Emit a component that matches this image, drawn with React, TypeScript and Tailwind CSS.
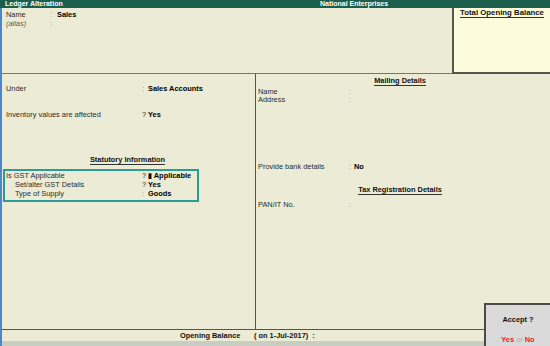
import React from "react";

const Row = ({
  label,
  sep,
  value,
  labelW,
  sepW,
  indent = 0,
  italic = false,
  lh = "leading-[9px]",
}: {
  label: string;
  sep: string;
  value?: React.ReactNode;
  labelW: string;
  sepW: string;
  indent?: number;
  italic?: boolean;
  lh?: string;
}) => (
  <div className={`flex ${lh}`}>
    <div className={`${labelW} shrink-0 text-[#2a2a2a] ${italic ? "italic text-[#555]" : ""}`}>
      {indent ? <span className="pl-[9px]">{label}</span> : label}
    </div>
    <div className={`${sepW} shrink-0 ${sep === "?" ? "text-[#222]" : "text-[#888]"}`}>{sep}</div>
    {value !== undefined && <div className="font-bold text-black">{value}</div>}
  </div>
);

export default function App() {
  return (
    <div
      className="w-[550px] h-[346px] flex flex-col bg-[#ececd6] text-[7.4px] relative overflow-hidden"
      style={{ fontFamily: '"Liberation Sans", Arial, sans-serif' }}
    >
      {/* Title bar */}
      <div className="h-[8px] flex items-center bg-[#1c5e4c] text-white font-bold text-[7px] leading-[8px]">
        <div className="w-[320px] pl-[5px]">Ledger Alteration</div>
        <div>National Enterprises</div>
      </div>

      <div className="flex-1 flex flex-col border-l-2 border-[#4f86c6]">
        {/* Top section */}
        <div className="h-[66px] flex">
          <div className="flex-1 border-b border-[#77776a] pt-[2px] pl-[4px]">
            <Row label="Name" sep=":" value="Sales" labelW="w-[44px]" sepW="w-[7px]" />
            <Row label="(alias)" sep=":" labelW="w-[44px]" sepW="w-[7px]" italic />
          </div>
          <div className="w-[98px] bg-[#fcfcdc] border-l-2 border-b-2 border-[#55554a] flex justify-center pt-[1px]">
            <div className="self-start font-bold text-[7.8px] leading-[8px] border-b border-[#333] text-[#111]">
              Total Opening Balance
            </div>
          </div>
        </div>

        {/* Middle section */}
        <div className="h-[255px] flex">
          <div className="w-[254px] border-r border-[#55554a] pt-[10px] pl-[4px]">
            <Row label="Under" sep=":" value="Sales Accounts" labelW="w-[136px]" sepW="w-[6px]" />
            <div className="mt-[16.5px]">
              <Row label="Inventory values are affected" sep="?" value="Yes" labelW="w-[136px]" sepW="w-[6px]" />
            </div>
            <div className="mt-[37px] flex justify-center pr-[2px] w-[245px]">
              <div className="font-bold leading-[8px] border-b border-[#333] text-[#111]">Statutory Information</div>
            </div>
            <div className="mt-[4px] -ml-[3px] w-[196px] border-2 border-[#2a9c95] pl-[1px] pb-[1.4px]">
              <Row label="Is GST Applicable" sep="?" value={<span>▮ Applicable</span>} labelW="w-[136px]" sepW="w-[6px]" lh="leading-[9.2px]" />
              <Row label="Set/alter GST Details" sep="?" value="Yes" labelW="w-[136px]" sepW="w-[6px]" indent={1} lh="leading-[9.2px]" />
              <Row label="Type of Supply" sep=":" value="Goods" labelW="w-[136px]" sepW="w-[6px]" indent={1} lh="leading-[9.2px]" />
            </div>
          </div>
          <div className="flex-1 pt-[3px] pl-[2px]">
            <div className="flex justify-center pr-[8px]">
              <div className="font-bold leading-[8px] border-b border-[#333] text-[#111]">Mailing Details</div>
            </div>
            <div className="mt-[2px]">
              <Row label="Name" sep=":" labelW="w-[91px]" sepW="w-[5px]" lh="leading-[8.4px]" />
              <Row label="Address" sep=":" labelW="w-[91px]" sepW="w-[5px]" lh="leading-[8.4px]" />
            </div>
            <div className="mt-[57px]">
              <Row label="Provide bank details" sep=":" value="No" labelW="w-[91px]" sepW="w-[5px]" />
            </div>
            <div className="mt-[15.5px] flex justify-center pr-[8px]">
              <div className="font-bold leading-[8px] border-b border-[#333] text-[#111]">Tax Registration Details</div>
            </div>
            <div className="mt-[5px]">
              <Row label="PAN/IT No." sep=":" labelW="w-[91px]" sepW="w-[5px]" />
            </div>
          </div>
        </div>

        {/* Footer */}
        <div className="border-t border-[#55554a] h-[12px] flex items-center font-bold text-[#111] leading-[11px]">
          <div className="pl-[178px] w-[252px]">Opening Balance</div>
          <div>( on 1-Jul-2017)&nbsp;&nbsp;:</div>
        </div>
        <div className="h-[5px] bg-[#c9cec2]" />
      </div>

      {/* Accept box */}
      <div className="absolute left-[484px] top-[303px] w-[66px] h-[43px] bg-[#dadada] border-2 border-[#4a4a4a] border-r-0 border-b-0 flex flex-col items-center">
        <div className="mt-[10px] font-bold text-[#111] leading-[9px]">Accept ?</div>
        <div className="mt-[11px] leading-[9px]">
          <span className="font-bold text-[#e8202a]">Yes</span>
          <span className="text-[#aaa]"> or </span>
          <span className="font-bold text-[#e8202a]">No</span>
        </div>
      </div>
    </div>
  );
}
